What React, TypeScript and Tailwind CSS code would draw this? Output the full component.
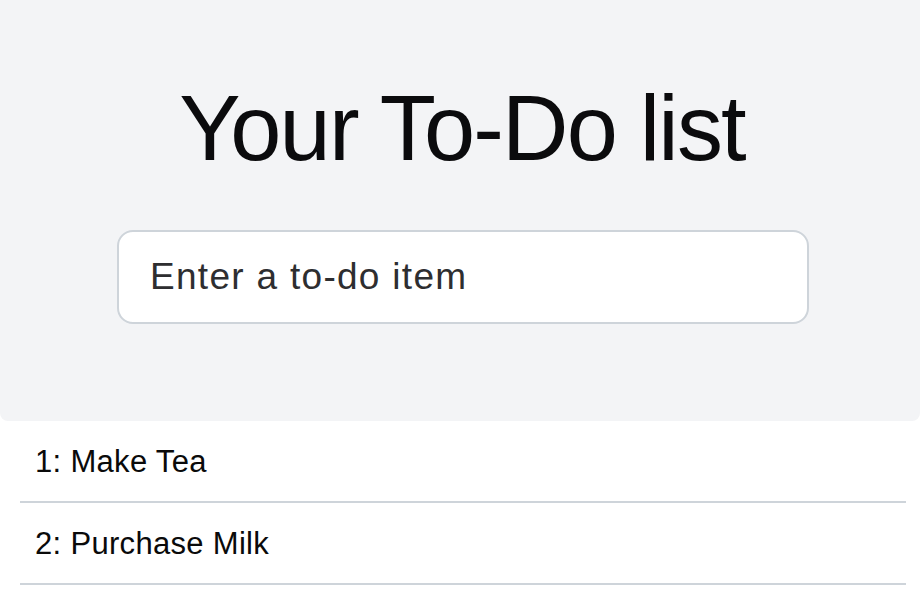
import React, { useState } from 'react';

const todos = ['Make Tea', 'Purchase Milk'];

export default function App() {
  const [text, setText] = useState('');

  return (
    <div className="min-h-screen w-full bg-white font-['Liberation_Sans',Arial,sans-serif]">
      {/* header */}
      <div className="h-[421px] rounded-b-lg bg-[#f3f4f6] pt-[82px] flex flex-col items-center">
        <h1 className="text-[92px] leading-none tracking-[-0.02em] text-[#0b0b0d] font-normal pl-[4px]">
          Your To-Do list
        </h1>
        <input
          type="text"
          value={text}
          onChange={e => setText(e.target.value)}
          placeholder="Enter a to-do item"
          className="mt-[56px] ml-[6px] w-[692px] h-[94px] rounded-2xl border-2 border-[#ced4da] bg-white px-[31px] text-[37px] tracking-[0.035em] text-[#2e2e30] placeholder:text-[#2e2e30] outline-none"
        />
      </div>

      {/* list */}
      <ul className="ml-5 mr-[14px]">
        {todos.map((t, i) => (
          <li
            key={t}
            className="h-[82px] border-b-2 border-[#ced4da] flex items-center pl-[15px] pt-[3px] text-[31px] tracking-[0.01em] text-[#0a0a0a]"
          >
            {i + 1}: {t}
          </li>
        ))}
      </ul>
    </div>
  );
}
